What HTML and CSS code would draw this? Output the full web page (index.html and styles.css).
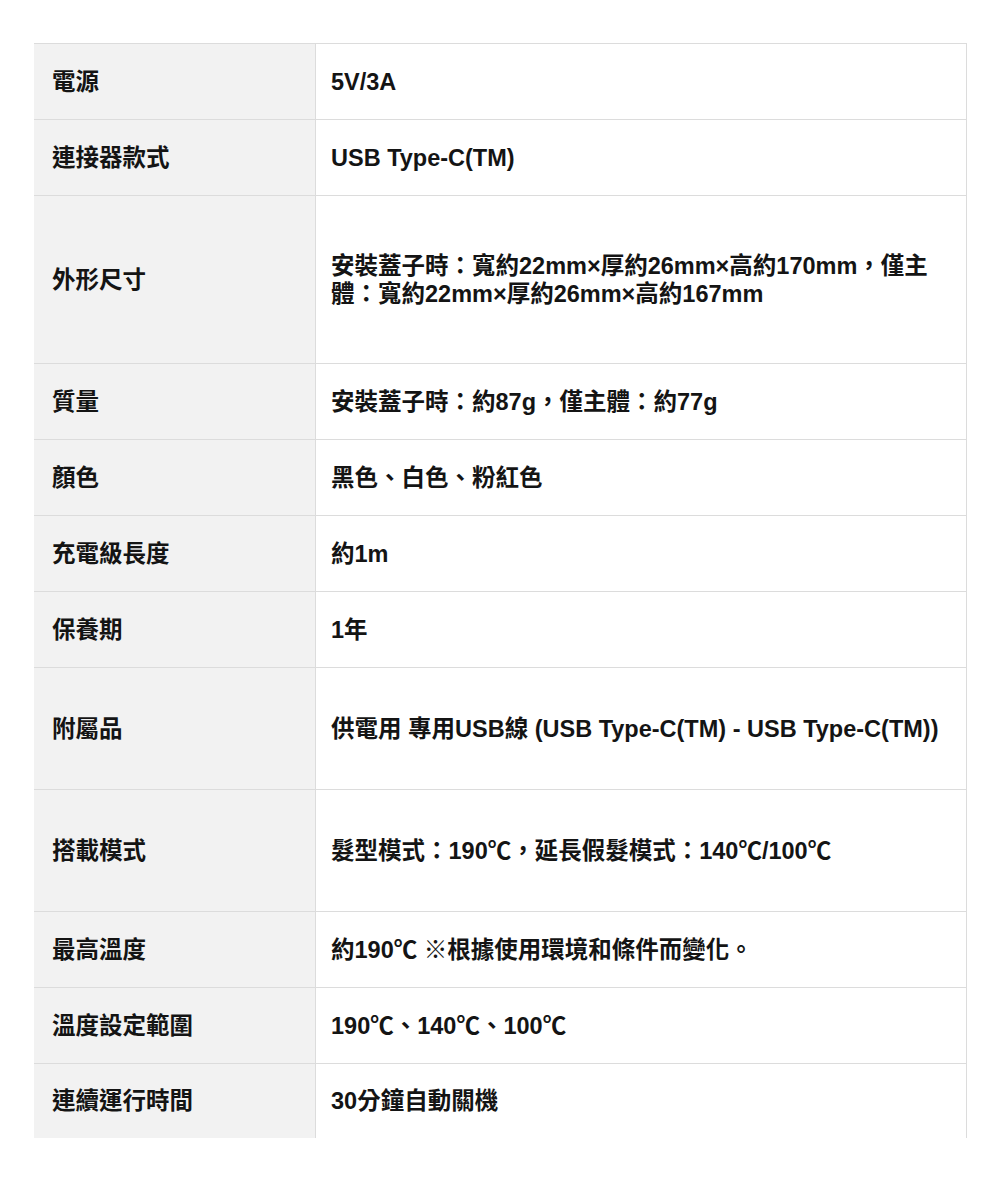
FILE: index.html
```html
<!DOCTYPE html>
<html lang="zh-Hant">
<head>
<meta charset="utf-8">
<title>規格</title>
<link rel="stylesheet" href="styles.css">
</head>
<body>
<div class="wrap">
<table class="spec">
<tbody>
<tr class="r76"><th>電源</th><td>5V/3A</td></tr>
<tr class="r76"><th>連接器款式</th><td>USB Type-C(TM)</td></tr>
<tr class="r168"><th>外形尺寸</th><td>安裝蓋子時：寬約22mm×厚約26mm×高約170mm，僅主體：寬約22mm×厚約26mm×高約167mm</td></tr>
<tr class="r76"><th>質量</th><td>安裝蓋子時：約87g，僅主體：約77g</td></tr>
<tr class="r76"><th>顏色</th><td>黑色、白色、粉紅色</td></tr>
<tr class="r76"><th>充電級長度</th><td>約1m</td></tr>
<tr class="r76"><th>保養期</th><td>1年</td></tr>
<tr class="r122"><th>附屬品</th><td>供電用 專用USB線 (USB Type-C(TM) - USB Type-C(TM))</td></tr>
<tr class="r122"><th>搭載模式</th><td>髮型模式：190℃，延長假髮模式：140℃/100℃</td></tr>
<tr class="r76"><th>最高溫度</th><td>約190℃ ※根據使用環境和條件而變化。</td></tr>
<tr class="r76"><th>溫度設定範圍</th><td>190℃、140℃、100℃</td></tr>
<tr class="r75 last"><th>連續運行時間</th><td>30分鐘自動關機</td></tr>
</tbody>
</table>
</div>
</body>
</html>
```
FILE: styles.css
```css
html, body {
  margin: 0;
  padding: 0;
  background: #ffffff;
}

.wrap {
  padding: 43px 0 0 34px;
}

.spec {
  width: 933px;
  border-collapse: collapse;
  table-layout: fixed;
  font-family: "Liberation Sans", "Noto Sans CJK TC", sans-serif;
  font-weight: bold;
  font-size: 23.5px;
  line-height: 28px;
  color: #141414;
}

.spec th,
.spec td {
  border-top: 1px solid #dcdcdc;
  vertical-align: middle;
  text-align: left;
  font-weight: bold;
}

.spec th {
  width: 263px;
  padding: 0 0 0 18px;
  background: #f2f2f2;
  border-right: 1px solid #dcdcdc;
}

.spec td {
  padding: 0 22px 0 15px;
  border-right: 1px solid #dcdcdc;
}

.spec tr.r76 th, .spec tr.r76 td { height: 75px; }
.spec tr.r75 th, .spec tr.r75 td { height: 74px; }
.spec tr.r122 th, .spec tr.r122 td { height: 121px; }
.spec tr.r168 th, .spec tr.r168 td { height: 167px; }
```
